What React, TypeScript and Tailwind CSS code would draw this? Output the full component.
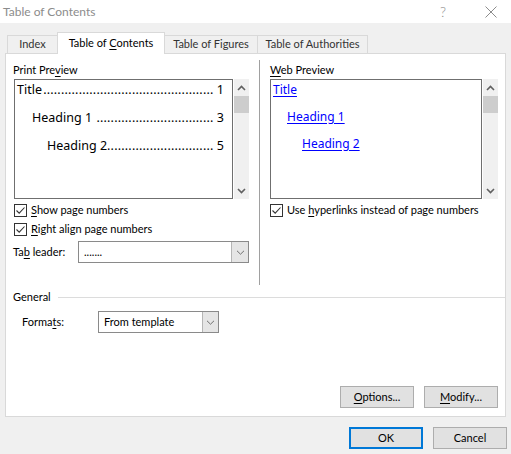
import React from "react";

const U = ({ children }: { children: React.ReactNode }) => (
  <span className="underline underline-offset-2">{children}</span>
);

const Check = () => (
  <div className="w-[13px] h-[13px] border border-[#333333] bg-white flex items-center justify-center shrink-0">
    <svg width="11" height="11" viewBox="0 0 11 11">
      <path d="M1.5 5.5 L4.2 8.2 L9.5 2.5" fill="none" stroke="#333333" strokeWidth="1.1" />
    </svg>
  </div>
);

const Chevron = ({ up }: { up?: boolean }) => (
  <svg width="9" height="6" viewBox="0 0 9 6">
    <path
      d={up ? "M1 5 L4.5 1.5 L8 5" : "M1 1 L4.5 4.5 L8 1"}
      fill="none"
      stroke="#606060"
      strokeWidth="1.6"
    />
  </svg>
);

const SmallChevron = () => (
  <svg width="9" height="5" viewBox="0 0 9 5">
    <path d="M1 0.8 L4.5 4.2 L8 0.8" fill="none" stroke="#707070" strokeWidth="1" />
  </svg>
);

const Scrollbar = () => (
  <div className="w-[15px] h-[120px] bg-[#f0f0f0] flex flex-col items-center shrink-0">
    <div className="h-[17px] w-full flex items-center justify-center">
      <Chevron up />
    </div>
    <div className="h-[17px] w-full bg-[#cdcdcd]" />
    <div className="flex-1" />
    <div className="h-[17px] w-full flex items-center justify-center">
      <Chevron />
    </div>
  </div>
);

const TocLine = ({
  text,
  num,
  indent,
  dots,
}: {
  text: string;
  num: string;
  indent: number;
  dots: number;
}) => (
  <div className="flex h-[20px] leading-[20px] whitespace-nowrap" style={{ paddingLeft: indent }}>
    <span className="shrink-0">{text}</span>
    <span className="flex-1 min-w-0 overflow-hidden text-right tracking-[0.2px]">{".".repeat(dots)}</span>
    <span className="shrink-0">&nbsp;{num}</span>
  </div>
);

const Select = ({ width, value, btn }: { width: number; value: string; btn: number }) => (
  <div
    className="h-[22px] border border-[#8a8a8a] bg-white flex items-stretch"
    style={{ width }}
  >
    <div className="flex-1 pl-[5px] flex items-center text-black">
      <span>{value}</span>
    </div>
    <div
      className="bg-[#e5e5e5] border-l border-[#b5b5b5] flex items-center justify-center"
      style={{ width: btn }}
    >
      <SmallChevron />
    </div>
  </div>
);

const Btn = ({ children, def }: { children: React.ReactNode; def?: boolean }) => (
  <div
    className={
      "w-[74px] h-[22px] bg-[#e1e1e1] flex items-center justify-center text-black " +
      (def ? "border-2 border-[#0078d7]" : "border border-[#adadad]")
    }
  >
    {children}
  </div>
);

export default function App() {
  return (
    <div
      className="w-[511px] h-[454px] bg-[#f0f0f0] flex flex-col text-[11px] text-black overflow-hidden"
      style={{ fontFamily: 'Lato, "Noto Sans", sans-serif' }}
    >
      {/* Title bar */}
      <div className="h-[23px] bg-white flex items-center shrink-0">
        <div className="pl-[3px] text-[12px] text-[#8c8c8c] flex-1">
          <span>Table of Contents</span>
        </div>
        <div className="w-[12px] text-[14px] text-[#8c8c8c] mr-[33px] font-light">
          <span>?</span>
        </div>
        <div className="mr-[14px]">
          <svg width="12" height="12" viewBox="0 0 12 12">
            <path d="M0.5 0.5 L11.5 11.5 M11.5 0.5 L0.5 11.5" stroke="#8c8c8c" strokeWidth="1" />
          </svg>
        </div>
      </div>

      {/* Tabs */}
      <div className="pt-[9px] px-[5px] flex flex-col">
        <div className="flex items-end pl-[2px] -mb-px relative z-10">
          <div className="w-[51px] h-[19px] border border-[#d9d9d9] bg-[#f0f0f0] flex items-center justify-center text-[#333]">
            <span>Index</span>
          </div>
          <div className="w-[108px] h-[22px] -ml-px border border-b-0 border-[#d9d9d9] bg-white flex items-center justify-center relative z-10 pb-[1px]">
            <span>
              Table of <U>C</U>ontents
            </span>
          </div>
          <div className="w-[94px] h-[19px] -ml-px border border-[#d9d9d9] bg-[#f0f0f0] flex items-center justify-center text-[#333]">
            <span>Table of Figures</span>
          </div>
          <div className="w-[111px] h-[19px] -ml-px border border-[#d9d9d9] bg-[#f0f0f0] flex items-center justify-center text-[#333]">
            <span>Table of Authorities</span>
          </div>
        </div>

        {/* Panel */}
        <div className="h-[364px] border border-[#d9d9d9] bg-white flex flex-col pl-[7px]">
          <div className="flex items-start pt-[8px]">
            {/* Left column */}
            <div className="w-[236px] flex flex-col">
              <div className="h-[16px] leading-[16px]">
                <span>
                  Print Pre<U>v</U>iew
                </span>
              </div>
              <div className="mt-[1px] flex">
                <div
                  className="ml-[1px] w-[219px] h-[120px] border border-[#6f6f6f] pl-[2px] pr-[8px] text-[12.5px] flex flex-col gap-[8px]"
                  style={{ fontFamily: '"Noto Sans", sans-serif' }}
                >
                  <TocLine text="Title" num="1" indent={0} dots={48} />
                  <TocLine text={"Heading 1\u00a0"} num="3" indent={15} dots={33} />
                  <TocLine text="Heading 2" num="5" indent={30} dots={30} />
                </div>
                <div className="ml-[1px]">
                  <Scrollbar />
                </div>
              </div>
              <div className="mt-[2px] h-[19px] flex items-center pl-[1px] gap-[4px]">
                <Check />
                <span>
                  <U>S</U>how page numbers
                </span>
              </div>
              <div className="h-[19px] flex items-center pl-[1px] gap-[4px]">
                <Check />
                <span>
                  <U>R</U>ight align page numbers
                </span>
              </div>
              <div className="mt-[2px] flex items-center">
                <div className="w-[65px]">
                  <span>
                    Ta<U>b</U> leader:
                  </span>
                </div>
                <Select width={171} value="......." btn={17} />
              </div>
            </div>

            {/* Divider */}
            <div className="ml-[10px] mt-[-2px] w-px h-[225px] bg-[#a0a0a0]" />

            {/* Right column */}
            <div className="ml-[10px] w-[228px] flex flex-col">
              <div className="h-[16px] leading-[16px]">
                <span>
                  <U>W</U>eb Preview
                </span>
              </div>
              <div className="mt-[1px] flex">
                <div
                  className="w-[213px] h-[120px] border border-[#6f6f6f] pl-[2px] text-[12px] text-[#0000ff] flex flex-col gap-[7px]"
                  style={{ fontFamily: '"Noto Sans", sans-serif' }}
                >
                  <div className="h-[20px] leading-[20px]">
                    <span className="underline underline-offset-2">Title</span>
                  </div>
                  <div className="h-[20px] leading-[20px] pl-[14px]">
                    <span className="underline underline-offset-2">Heading 1</span>
                  </div>
                  <div className="h-[20px] leading-[20px] pl-[29px]">
                    <span className="underline underline-offset-2">Heading 2</span>
                  </div>
                </div>
                <div className="ml-[1px]">
                  <Scrollbar />
                </div>
              </div>
              <div className="mt-[2px] h-[19px] flex items-center gap-[4px]">
                <Check />
                <span>
                  Use <U>h</U>yperlinks instead of page numbers
                </span>
              </div>
            </div>
          </div>

          {/* General */}
          <div className="mt-[4px] h-[16px] flex items-center">
            <span>General</span>
            <div className="ml-[7px] flex-1 h-px bg-[#dcdcdc]" />
          </div>
          <div className="mt-[6px] flex items-center pl-[9px]">
            <div className="w-[76px]">
              <span>
                Forma<U>t</U>s:
              </span>
            </div>
            <Select width={121} value="From template" btn={16} />
          </div>

          <div className="mt-auto pb-[8px] pr-[7px] flex justify-end gap-[10px]">
            <Btn>
              <span>
                <U>O</U>ptions...
              </span>
            </Btn>
            <Btn>
              <span>
                <U>M</U>odify...
              </span>
            </Btn>
          </div>
        </div>
      </div>

      {/* Bottom buttons */}
      <div className="mt-[10px] pr-[4px] flex justify-end gap-[10px]">
        <Btn def>
          <span>OK</span>
        </Btn>
        <Btn>
          <span>Cancel</span>
        </Btn>
      </div>
    </div>
  );
}
